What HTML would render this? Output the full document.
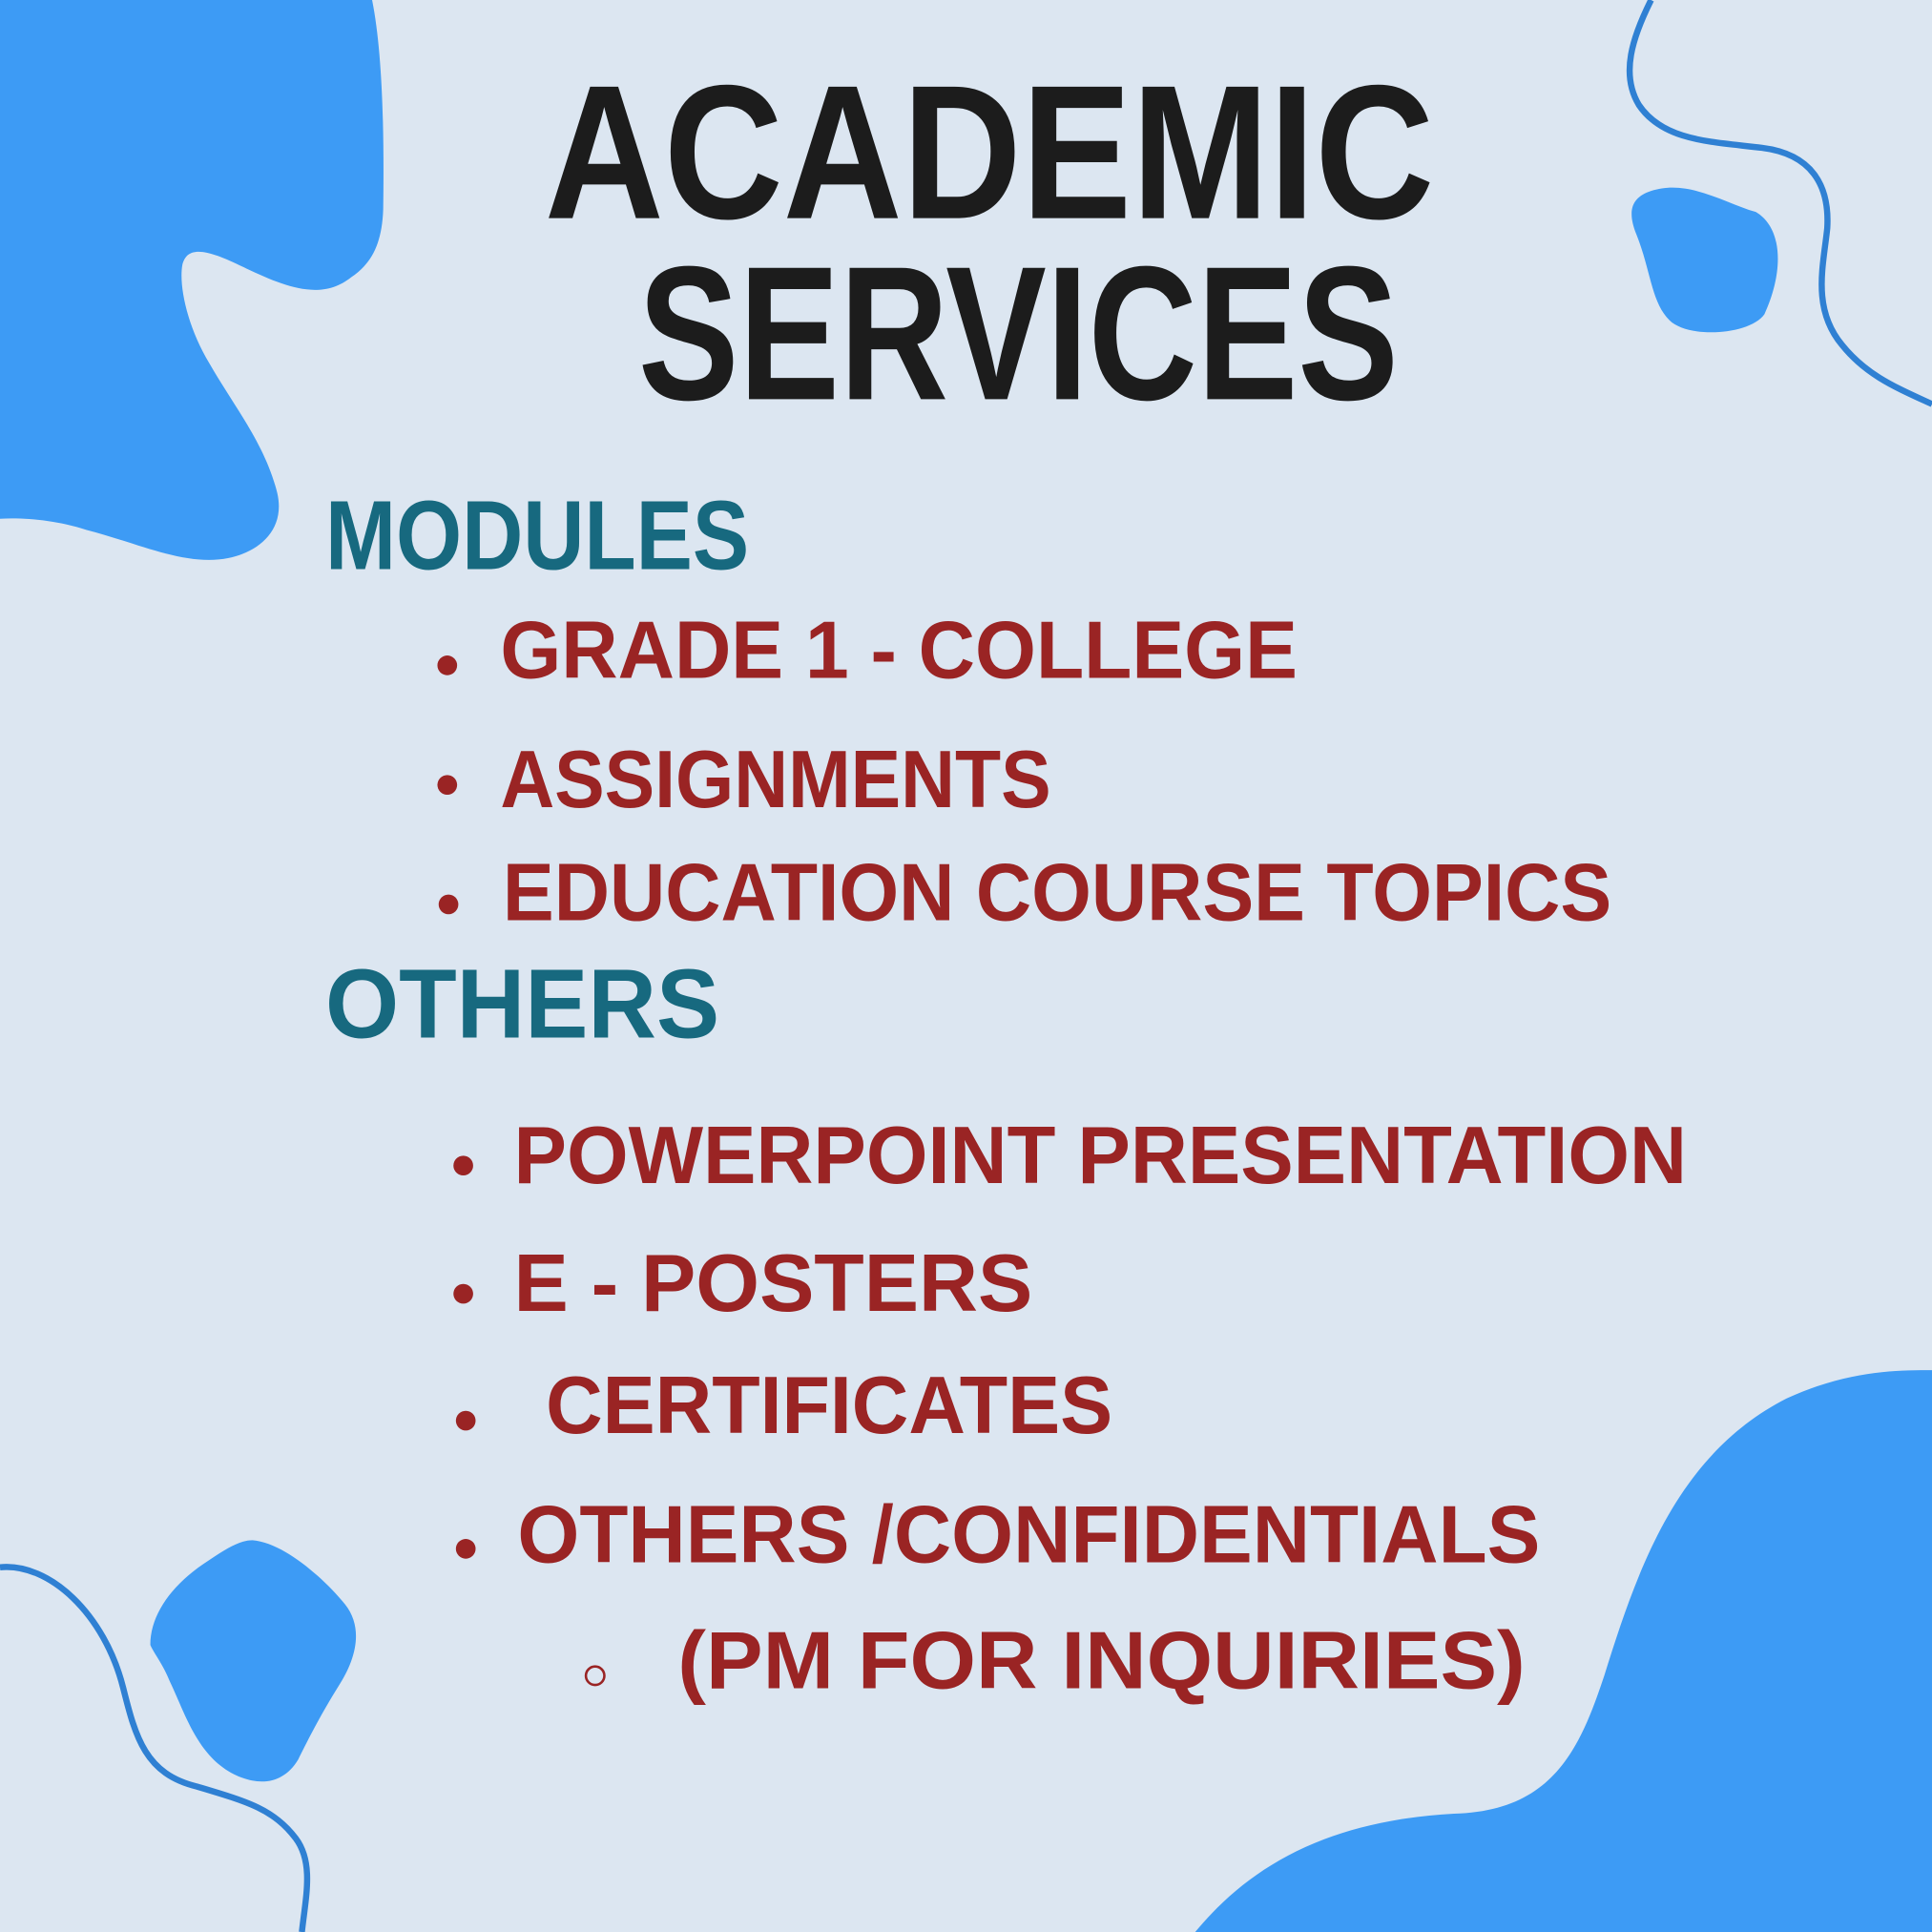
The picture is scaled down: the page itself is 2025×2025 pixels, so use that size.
<!DOCTYPE html>
<html><head><meta charset="utf-8"><style>
html,body{margin:0;padding:0;background:#dce6f1;}
svg{display:block;}
text{font-family:"Liberation Sans",sans-serif;font-weight:bold;}
</style></head><body>
<svg width="2025" height="2025" viewBox="0 0 1568 1568" xmlns="http://www.w3.org/2000/svg">
<rect width="1568" height="1568" fill="#dce6f1"/>
<!-- top-left blob -->
<path d="M0,0 H302 C310,40 312,100 311,170 C310,200 300,215 285,225 C260,245 230,232 200,218 C170,203 152,198 148,215 C145,232 152,265 170,295 C190,330 215,360 225,400 C232,430 210,448 185,453 C150,460 110,440 70,430 C45,422 20,420 0,421 Z" fill="#3d9bf5"/>
<!-- top-right line -->
<path d="M1340,0 C1325,30 1315,60 1330,85 C1350,115 1390,115 1430,120 C1470,125 1485,150 1483,185 C1480,215 1470,250 1495,280 C1515,305 1540,315 1568,328" fill="none" stroke="#2f80d3" stroke-width="5"/>
<!-- top-right small blob -->
<path d="M1340,155 C1370,145 1400,165 1425,172 C1447,185 1448,220 1432,255 C1420,272 1370,275 1355,260 C1340,245 1340,220 1328,190 C1320,170 1325,160 1340,155 Z" fill="#3d9bf5"/>
<!-- bottom-left blob -->
<path d="M205,1250 C230,1252 262,1280 280,1302 C296,1322 288,1348 275,1368 C260,1392 250,1412 242,1428 C230,1448 210,1450 190,1440 C160,1425 150,1390 138,1365 C132,1350 125,1342 122,1335 C122,1310 140,1285 170,1266 C185,1256 195,1250 205,1250 Z" fill="#3d9bf5"/>
<!-- bottom-left line -->
<path d="M0,1272 C40,1268 85,1310 100,1370 C110,1410 118,1440 160,1450 C200,1462 222,1468 240,1492 C255,1512 248,1540 245,1568" fill="none" stroke="#2f80d3" stroke-width="5"/>
<!-- bottom-right blob -->
<path d="M970,1568 C1010,1520 1070,1478 1180,1472 C1260,1470 1282,1420 1302,1360 C1330,1270 1362,1180 1450,1135 C1500,1112 1540,1112 1568,1112 V1568 Z" fill="#3d9bf5"/>

<g fill="#1c1c1c">
<text x="442" y="177" font-size="155" textLength="722" lengthAdjust="spacingAndGlyphs">ACADEMIC</text>
<text x="518" y="324" font-size="155" textLength="617" lengthAdjust="spacingAndGlyphs">SERVICES</text>
</g>
<g fill="#17697f">
<text x="264" y="462" font-size="80" textLength="344" lengthAdjust="spacingAndGlyphs">MODULES</text>
<text x="264" y="842" font-size="80" textLength="320" lengthAdjust="spacingAndGlyphs">OTHERS</text>
</g>
<g fill="#9a2424">
<circle cx="363" cy="540" r="8"/>
<text x="406" y="550" font-size="66" textLength="647" lengthAdjust="spacingAndGlyphs">GRADE 1 - COLLEGE</text>
<circle cx="363" cy="637" r="8"/>
<text x="406" y="655" font-size="66" textLength="447" lengthAdjust="spacingAndGlyphs">ASSIGNMENTS</text>
<circle cx="364" cy="734" r="8"/>
<text x="408" y="747" font-size="66" textLength="900" lengthAdjust="spacingAndGlyphs">EDUCATION COURSE TOPICS</text>
<circle cx="376" cy="946" r="8"/>
<text x="417" y="960" font-size="66" textLength="952" lengthAdjust="spacingAndGlyphs">POWERPOINT PRESENTATION</text>
<circle cx="376" cy="1050" r="8"/>
<text x="417" y="1064" font-size="66" textLength="421" lengthAdjust="spacingAndGlyphs">E - POSTERS</text>
<circle cx="378" cy="1153" r="8"/>
<text x="443" y="1163" font-size="66" textLength="460" lengthAdjust="spacingAndGlyphs">CERTIFICATES</text>
<circle cx="378" cy="1257" r="8"/>
<text x="420" y="1268" font-size="66" textLength="830" lengthAdjust="spacingAndGlyphs">OTHERS /CONFIDENTIALS</text>
<text x="550" y="1370" font-size="66" textLength="688" lengthAdjust="spacingAndGlyphs">(PM FOR INQUIRIES)</text>
</g>
<circle cx="483" cy="1360" r="7.5" fill="none" stroke="#9a2424" stroke-width="2"/>
</svg>
</body></html>
